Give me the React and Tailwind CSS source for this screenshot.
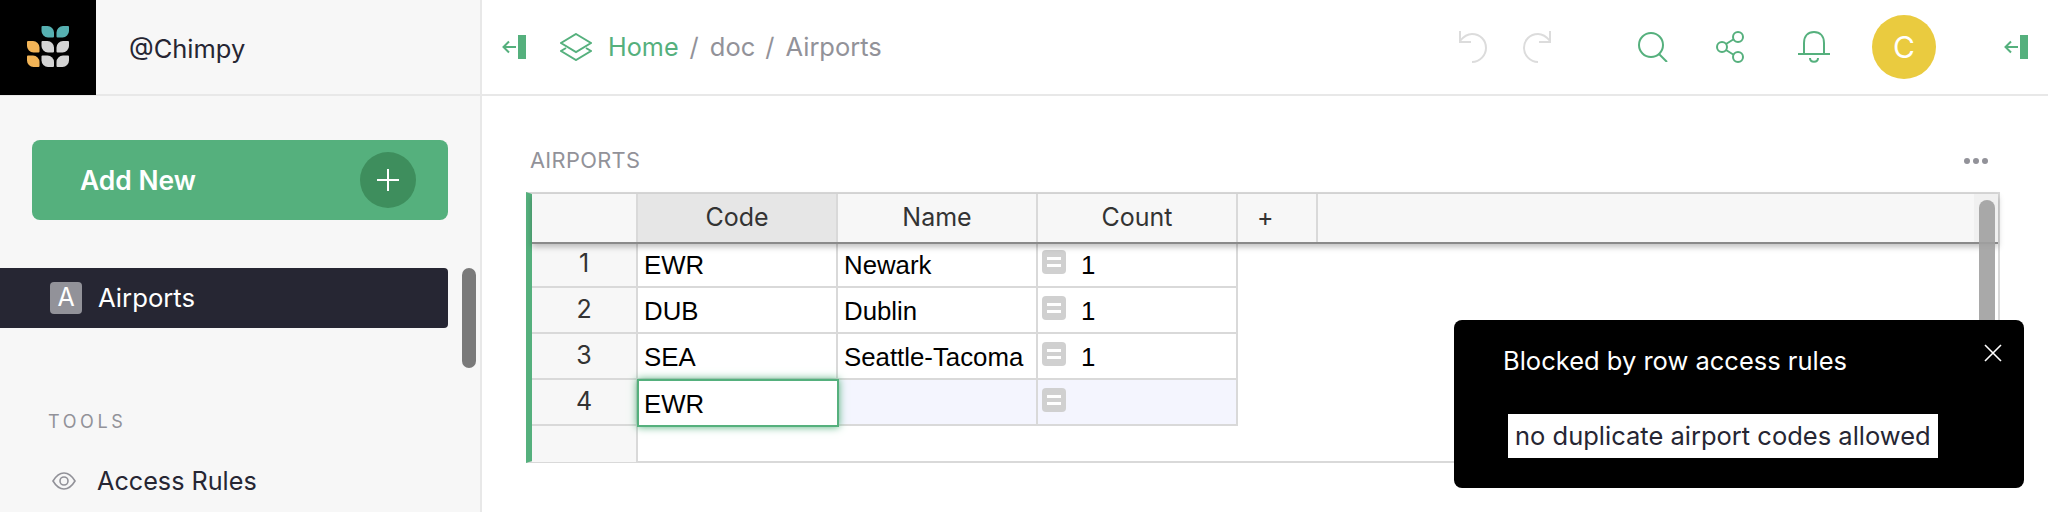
const GREEN = "#55b07d";

const ROWS = [
  { n: 1, code: "EWR", name: "Newark", count: "1" },
  { n: 2, code: "DUB", name: "Dublin", count: "1" },
  { n: 3, code: "SEA", name: "Seattle-Tacoma", count: "1" },
];

const LEFT_LEAF = "h5a6.5 6.5 0 0 1 6.5 6.5v4a1 1 0 0 1-1 1h-5a6.5 6.5 0 0 1-6.5-6.5v-4a1 1 0 0 1 1-1z";
const RIGHT_LEAF = "h-5a6.5 6.5 0 0 0-6.5 6.5v4a1 1 0 0 0 1 1h5a6.5 6.5 0 0 0 6.5-6.5v-4a1 1 0 0 0-1-1z";

function Logo() {
  return (
    <svg width="42" height="42" viewBox="0 0 42 42">
      <path d={`M15.5 0${LEFT_LEAF}`} fill="#56b0b1" />
      <path d={`M41 0${RIGHT_LEAF}`} fill="#56b0b1" />
      <path d={`M1 15${LEFT_LEAF}`} fill="#f2b457" />
      <path d={`M1 29.5${LEFT_LEAF}`} fill="#f2b457" />
      <path d={`M15.5 15${LEFT_LEAF}`} fill="#d4d4d4" />
      <path d={`M15.5 29.5${LEFT_LEAF}`} fill="#d4d4d4" />
      <path d={`M41 15${RIGHT_LEAF}`} fill="#d4d4d4" />
      <path d={`M41 29.5${RIGHT_LEAF}`} fill="#d4d4d4" />
    </svg>
  );
}

function Collapse() {
  return (
    <svg width="24" height="24" viewBox="0 0 24 24" fill="none" stroke={GREEN} strokeWidth="2">
      <path d="M14 12H2M7 6.5 1.5 12 7 17.5" />
      <rect x="16" y="0" width="8" height="24" fill={GREEN} stroke="none" />
    </svg>
  );
}

function FormulaChip() {
  return (
    <span className="-ml-[2px] flex h-6 w-6 flex-col items-center justify-center gap-[4px] rounded-[4px] bg-[#d0d0d0]">
      <span className="h-[3px] w-[14px] bg-white" />
      <span className="h-[3px] w-[14px] bg-white" />
    </span>
  );
}

function Sidebar() {
  return (
    <aside className="h-full w-[482px] shrink-0 border-r-2 border-[#e8e8e8] bg-[#f7f7f7]">
      <div className="flex h-[96px] items-center border-b-2 border-[#e8e8e8]">
        <div className="flex h-[96px] w-[96px] shrink-0 items-center justify-center bg-black">
          <Logo />
        </div>
        <span className="ml-[33px] pt-[4px] text-[25.5px] text-[#262633]">@Chimpy</span>
      </div>
      <div className="pt-[44px]">
        <div className="ml-[32px] flex h-[80px] w-[416px] items-center justify-between rounded-[8px] bg-[#55b07d] pl-[48px] pr-[32px]">
          <span className="pt-[1px] text-[26.4px] font-semibold text-white">Add New</span>
          <span className="flex h-[56px] w-[56px] items-center justify-center rounded-full bg-[#3e8e5d]">
            <svg width="24" height="24" viewBox="0 0 24 24" stroke="#fff" strokeWidth="2">
              <path d="M12 1v22M1 12h22" />
            </svg>
          </span>
        </div>
        <div className="mt-[48px] flex h-[60px] w-[448px] items-center rounded-r-[4px] bg-[#262633] pl-[50px]">
          <span className="flex h-[32px] w-[32px] items-center justify-center rounded-[4px] bg-[#929299] text-[25px] text-white">A</span>
          <span className="ml-[16px] pt-[1px] text-[25.7px] text-white">Airports</span>
        </div>
        <div className="mt-[83px] pl-[48px] text-[18px] leading-[22px] tracking-[0.2em] text-[#929299]">TOOLS</div>
        <div className="mt-[33px] flex items-center pl-[52px] text-[25.2px] leading-[30px] text-[#262633]">
          <svg width="24" height="18" viewBox="0 0 24 18" fill="none" stroke="#929299" strokeWidth="1.6">
            <path d="M1 9c3-5 7-8 11-8s8 3 11 8c-3 5-7 8-11 8S4 14 1 9z" />
            <circle cx="12" cy="9" r="4" />
          </svg>
          <span className="ml-[21px]">Access Rules</span>
        </div>
      </div>
    </aside>
  );
}

function TopBar() {
  return (
    <header className="flex h-[96px] shrink-0 items-center border-b-2 border-[#e8e8e8] pl-[20px]">
      <Collapse />
      <svg className="ml-[34px]" width="32" height="28" viewBox="0 0 32 28" fill="none" stroke={GREEN} strokeWidth="2">
        <path d="M16 1 31 10 16 19 1 10z" />
        <path d="M6 15 1 18l15 9 15-9-5-3" />
      </svg>
      <span className="ml-[16px] pt-[1px] text-[25.2px] text-[#55b07d]">Home</span>
      <span className="ml-[11px] pt-[1px] text-[25.5px] text-[#929299]">/</span>
      <span className="ml-[11px] pt-[1px] text-[25.5px] text-[#929299]">doc</span>
      <span className="ml-[10px] pt-[1px] text-[25.5px] text-[#929299]">/</span>
      <span className="ml-[11px] pt-[1px] text-[25.5px] text-[#929299]">Airports</span>
      <div className="ml-auto flex items-center">
        <svg width="28" height="32" viewBox="0 0 28 32" fill="none" stroke="#dcdcdc" strokeWidth="2">
          <path d="M1 0v11h11" />
          <path d="M1 10C5 5 9 3 13 3c8 0 14 6 14 14 0 7-6 14-14 14" />
        </svg>
        <svg className="ml-[36px]" width="28" height="32" viewBox="0 0 28 32" fill="none" stroke="#dcdcdc" strokeWidth="2">
          <path d="M27 0v11H16" />
          <path d="M27 10C23 5 19 3 15 3 7 3 1 9 1 17c0 7 6 14 14 14" />
        </svg>
        <svg className="ml-[87px]" width="30" height="30" viewBox="0 0 30 30" fill="none" stroke={GREEN} strokeWidth="2">
          <circle cx="13" cy="13" r="12" />
          <path d="m21 22 8 8" />
        </svg>
        <svg className="ml-[48px]" width="28" height="32" viewBox="0 0 28 32" fill="none" stroke={GREEN} strokeWidth="2">
          <circle cx="6" cy="16" r="5" />
          <circle cx="22" cy="6" r="5" />
          <circle cx="22" cy="26" r="5" />
          <path d="m10 13 8-5M10 19l8 5" />
        </svg>
        <svg className="ml-[54px]" width="32" height="32" viewBox="0 0 32 32" fill="none" stroke={GREEN} strokeWidth="2">
          <path d="M6 23V12C6 5 10 1 16 1s10 4 10 11v11" />
          <path d="M0 23h32" />
          <path d="M12 27c0 5 8 5 8 0" />
        </svg>
        <span className="ml-[42px] flex h-[64px] w-[64px] items-center justify-center rounded-full bg-[#eacb3f] text-[30px] text-white">C</span>
      </div>
      <div className="ml-[68px] mr-[20px]">
        <Collapse />
      </div>
    </header>
  );
}

function Cell({ children, className = "" }) {
  return (
    <div className={`flex h-[46px] w-[200px] items-center border-r-2 border-b-2 border-[#d9d9d9] px-[6px] pt-[2px] font-['Liberation_Sans'] text-[25.8px] text-black ${className}`}>
      {children}
    </div>
  );
}

function RowNum({ children }) {
  return (
    <div className="flex h-[46px] w-[106px] items-center justify-center border-r-2 border-b-2 border-[#d9d9d9] bg-[#f7f7f7] text-[25px] text-[#333333]">
      {children}
    </div>
  );
}

function Grid() {
  return (
    <div className="relative ml-[44px] h-[271px] w-[1474px] border-l-[6px] border-t-2 border-r-2 border-b-2 border-[#d9d9d9] [border-left-color:#55b07d]">
      <div className="relative z-10 -mb-[2px] flex h-[50px] border-b-2 border-[#8a8a8a] bg-[#f7f7f7] text-[25px] text-[#333333] shadow-[0_3px_6px_rgba(0,0,0,0.25)]">
        <div className="w-[106px] border-r-2 border-[#d9d9d9]" />
        <div className="flex w-[200px] items-center justify-center border-r-2 border-[#d9d9d9] bg-[#e6e6e6]">Code</div>
        <div className="flex w-[200px] items-center justify-center border-r-2 border-[#d9d9d9]">Name</div>
        <div className="flex w-[200px] items-center justify-center border-r-2 border-[#d9d9d9]">Count</div>
        <div className="flex w-[80px] items-center border-r-2 border-[#d9d9d9] pl-[19px]">+</div>
      </div>
      {ROWS.map((row) => (
        <div key={row.n} className="flex">
          <RowNum>{row.n}</RowNum>
          <Cell>{row.code}</Cell>
          <Cell>{row.name}</Cell>
          <Cell>
            <span className="mb-[6px]"><FormulaChip /></span>
            <span className="ml-[15px]">{row.count}</span>
          </Cell>
        </div>
      ))}
      <div className="flex">
        <RowNum>4</RowNum>
        <div className="relative h-[46px] w-[200px]">
          <div className="absolute inset-[-1px] z-10 flex items-center border-2 border-[#55b07d] bg-white px-[5px] pt-[2px] font-['Liberation_Sans'] text-[25.8px] text-black shadow-[0_0_8px_rgba(85,176,125,1)]">EWR</div>
        </div>
        <Cell className="bg-[#f4f5fe]" />
        <Cell className="bg-[#f4f5fe]">
          <span className="mb-[6px]"><FormulaChip /></span>
        </Cell>
      </div>
      <div className="h-[36px] w-[106px] border-r-2 border-[#d9d9d9] bg-[#f7f7f7]" />
      <div className="absolute right-0 top-0 z-10 h-[48px] w-[24px] bg-[#f0f0f0]" />
      <div className="absolute right-[3px] top-[6px] z-20 h-[200px] w-[16px] rounded-full bg-[#a0a0a0]/90" />
    </div>
  );
}

function Toast() {
  return (
    <div className="absolute left-[1454px] top-[320px] z-30 h-[168px] w-[570px] rounded-[8px] bg-black text-[25.5px] text-white">
      <div className="absolute left-[49px] top-[25px] leading-[32px]">Blocked by row access rules</div>
      <svg className="absolute left-[530px] top-[24px]" width="18" height="18" viewBox="0 0 18 18" stroke="#fff" strokeWidth="1.6">
        <path d="m1 1 16 16M17 1 1 17" />
      </svg>
      <div className="absolute left-[54px] top-[94px] flex h-[44px] items-center bg-white px-[7px] pt-[1px] text-[#262633]">no duplicate airport codes allowed</div>
    </div>
  );
}

export default function App() {
  return (
    <div className="relative flex h-[512px] w-[2048px] overflow-hidden bg-white font-['Inter',sans-serif]">
      <Sidebar />
      <main className="flex min-w-0 flex-1 flex-col">
        <TopBar />
        <div className="flex items-center justify-between pl-[48px] pr-[60px] pt-[52px] text-[#929299]">
          <span className="text-[21.8px] leading-[24px] tracking-[0.015em]">AIRPORTS</span>
          <span className="mt-[2px] flex gap-[3px]">
            <span className="h-[6px] w-[6px] rounded-full bg-[#929299]" />
            <span className="h-[6px] w-[6px] rounded-full bg-[#929299]" />
            <span className="h-[6px] w-[6px] rounded-full bg-[#929299]" />
          </span>
        </div>
        <div className="mt-[20px]">
          <Grid />
        </div>
      </main>
      <div className="absolute left-[462px] top-[268px] h-[100px] w-[14px] rounded-full bg-[#7a7a7a]" />
      <Toast />
    </div>
  );
}
